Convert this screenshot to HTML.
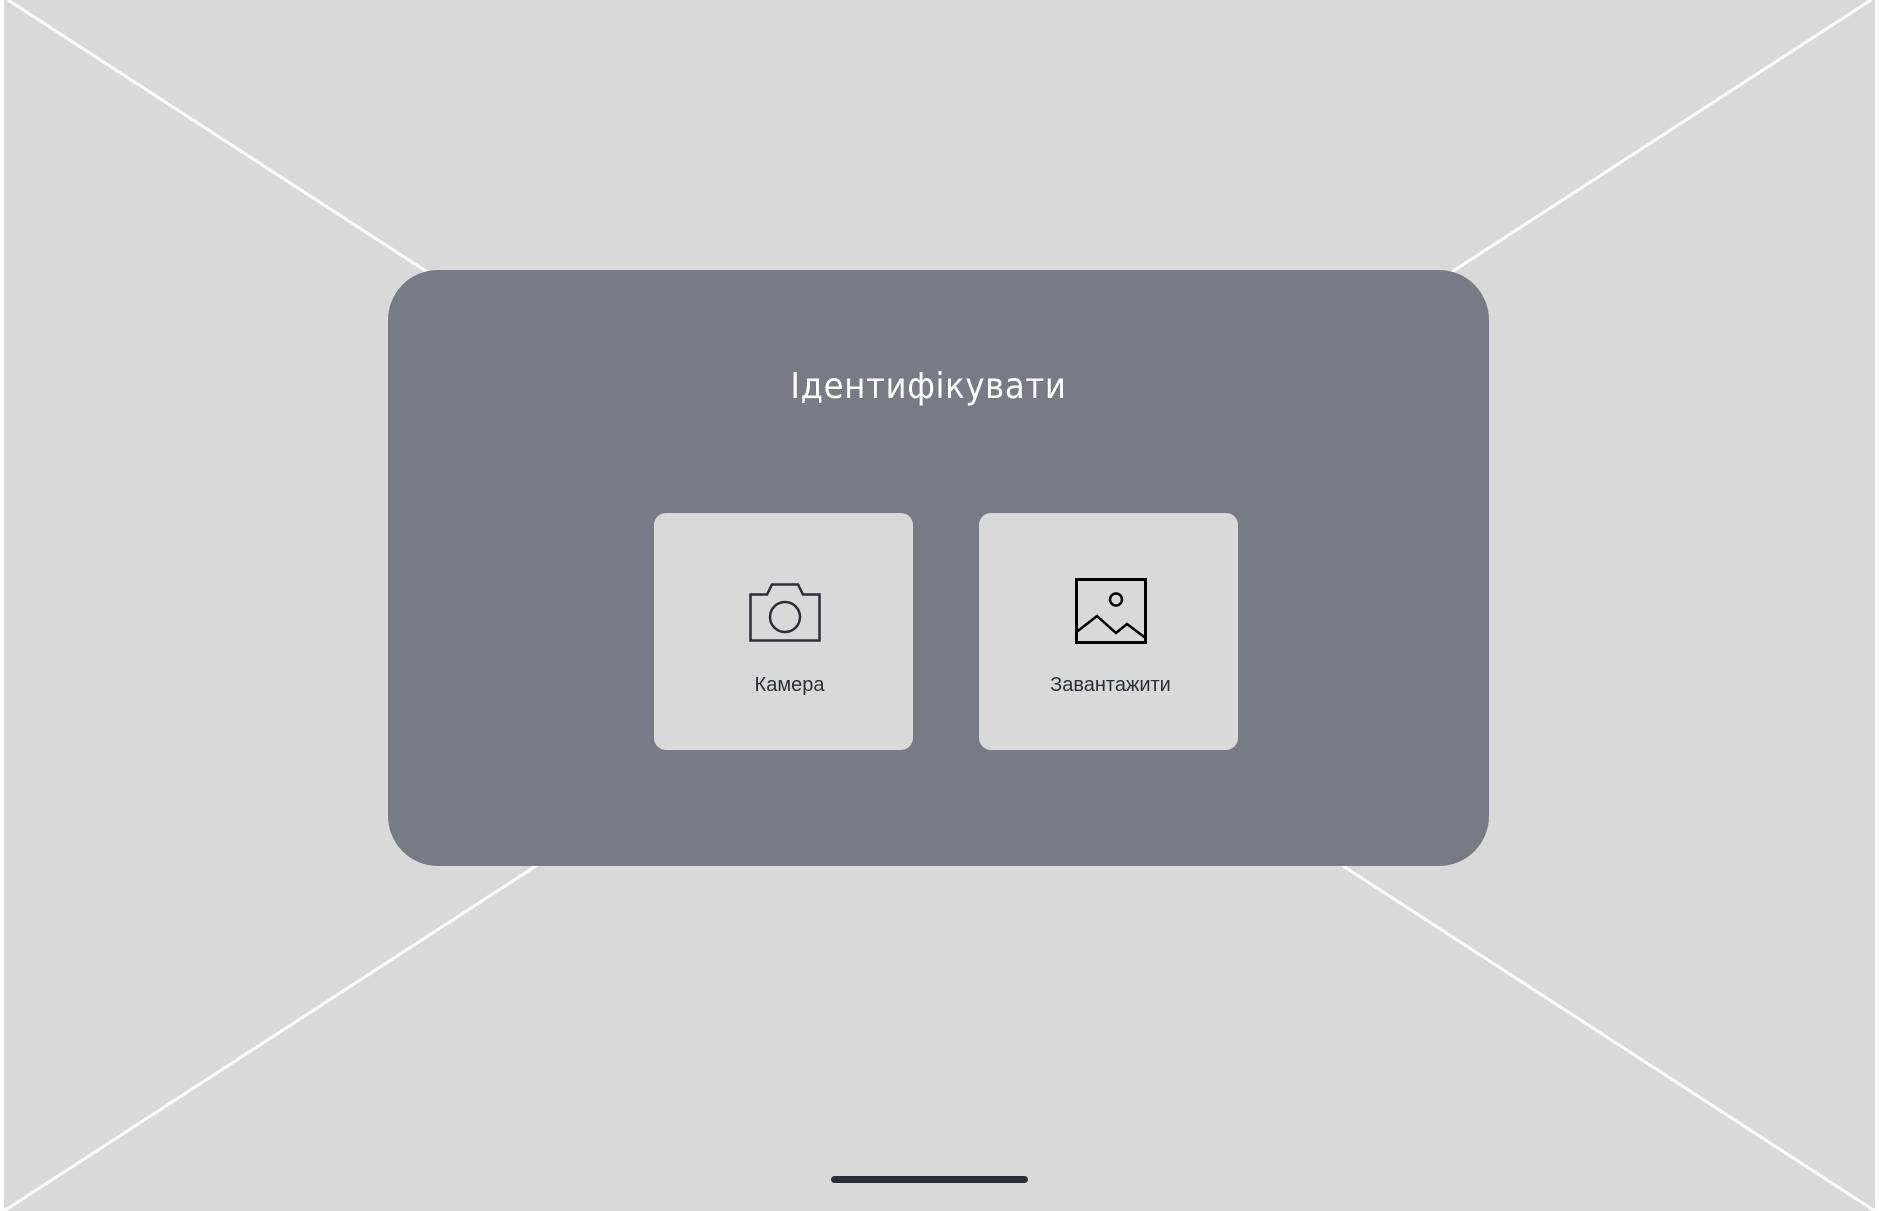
<!DOCTYPE html>
<html><head><meta charset="utf-8"><style>
html,body{margin:0;padding:0;width:1879px;height:1211px;overflow:hidden;background:#fff}
.bg{position:absolute;left:4px;top:0;width:1871px;height:1211px;background:#d9d9d9}
svg.x{position:absolute;left:0;top:0}
.panel{position:absolute;left:388px;top:270px;width:1101px;height:596px;background:#797b84;border-radius:50px}
.title{position:absolute;left:-10px;width:100%;top:96px;text-align:center;color:#fff;font:36px "DejaVu Sans","Liberation Sans",sans-serif;letter-spacing:0.7px;transform:scaleX(0.9)}
.card{position:absolute;top:243px;width:259px;height:237px;background:#d9d9d9;border-radius:12px}
.lbl{position:absolute;left:0;width:100%;top:161px;text-align:center;font:20px "Liberation Sans",sans-serif;color:#2a2f35}
.bar{position:absolute;left:831px;top:1176px;width:197px;height:7px;border-radius:4px;background:#2a2f35}
</style></head><body>
<div class="bg"></div>
<svg class="x" width="1879" height="1211"><line x1="8" y1="0" x2="1875" y2="1211" stroke="#fff" stroke-width="3"/><line x1="1871" y1="0" x2="4" y2="1211" stroke="#fff" stroke-width="3"/></svg>
<div class="panel">
<div class="title">Ідентифікувати</div>
<div class="card" style="left:266px">
<svg style="position:absolute;left:95px;top:68px" width="72" height="62" viewBox="0 0 72 62"><path d="M1.5 13.5H18L23 3.5H49L54 13.5H70.5V59.5H1.5Z" fill="none" stroke="#2a2f35" stroke-width="2.5"/><ellipse cx="36" cy="36" rx="15" ry="15" fill="none" stroke="#2a2f35" stroke-width="2.5"/></svg>
<div class="lbl" style="left:6px">Камера</div>
</div>
<div class="card" style="left:591px">
<svg style="position:absolute;left:96px;top:65px" width="72" height="66" viewBox="0 0 72 66"><rect x="1.5" y="1.5" width="69" height="63" fill="none" stroke="#000" stroke-width="3"/><circle cx="41" cy="21.5" r="6" fill="none" stroke="#000" stroke-width="2.5"/><path d="M1.5 54L22 38L41 55L52 46L70.5 60" fill="none" stroke="#000" stroke-width="2.5"/></svg>
<div class="lbl" style="left:2px">Завантажити</div>
</div>
</div>
<div class="bar"></div>
</body></html>
